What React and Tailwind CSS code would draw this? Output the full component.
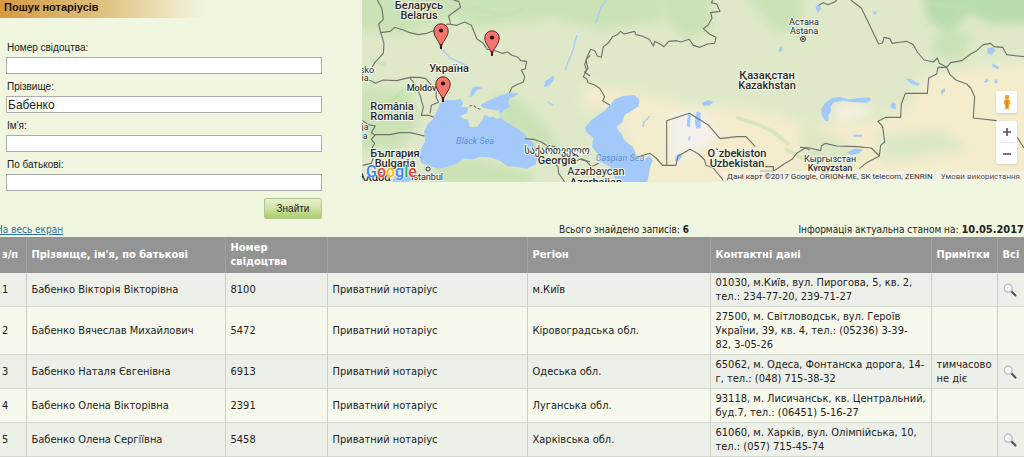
const fields = [
  { id: "certificate", label: "Номер свідоцтва:", value: "" },
  { id: "surname", label: "Прізвище:", value: "Бабенко" },
  { id: "name", label: "Ім'я:", value: "" },
  { id: "patronymic", label: "По батькові:", value: "" },
];

const rows = [
  { id: 1, name: "Бабенко Вікторія Вікторівна", number: "8100", region: "м.Київ", contact: "01030, м.Київ, вул. Пирогова, 5, кв. 2, тел.: 234-77-20, 239-71-27", note: "", details: true },
  { id: 2, name: "Бабенко Вячеслав Михайлович", number: "5472", region: "Кіровоградська обл.", contact: "27500, м. Світловодськ, вул. Героїв України, 39, кв. 4, тел.: (05236) 3-39-\n82, 3-05-26", note: "", details: false },
  { id: 3, name: "Бабенко Наталя Євгенівна", number: "6913", region: "Одеська обл.", contact: "65062, м. Одеса, Фонтанска дорога, 14-г, тел.: (048) 715-38-32", note: "тимчасово не діє", details: true },
  { id: 4, name: "Бабенко Олена Вікторівна", number: "2391", region: "Луганська обл.", contact: "93118, м. Лисичанськ, кв. Центральний, буд.7, тел.: (06451) 5-16-27", note: "", details: false },
  { id: 5, name: "Бабенко Олена Сергіївна", number: "5458", region: "Харківська обл.", contact: "61060, м. Харків, вул. Олімпійська, 10, тел.: (057) 715-45-74", note: "", details: true },
];

function SearchForm() {
  return (
    <section className="w-[362px] shrink-0 font-['Liberation_Sans',sans-serif]">
      <h1 className="h-[18px] w-[205px] bg-linear-to-r from-[#d39a3f] via-[#e0c17f] to-[#f1f6e0] pl-1 text-[11px] leading-[15px] font-bold text-[#1d0f00]">
        Пошук нотаріусів
      </h1>
      <form className="w-[322px] pt-[17px] pl-[6px]" onSubmit={(e) => e.preventDefault()}>
        {fields.map((field) => (
          <div key={field.id}>
            <label htmlFor={field.id} className="block pt-1 pl-px text-[10px] leading-[18px] text-[#222]">
              {field.label}
            </label>
            <input
              id={field.id}
              type="text"
              defaultValue={field.value}
              className="block h-[17px] w-full border border-[#abada8] bg-white px-px text-[12px] text-[#222] outline-none"
            />
          </div>
        ))}
        <div className="flex justify-end pt-[7px]">
          <button
            type="submit"
            className="h-[21px] w-[58px] rounded-xs border border-[#b5c592] bg-linear-to-b from-[#e9f1d2] via-[#cfe2a4] to-[#a9cd66] text-[10px] text-[#222]"
          >
            Знайти
          </button>
        </div>
      </form>
    </section>
  );
}

function Pin({ x, y }) {
  return (
    <g transform={`translate(${x} ${y})`}>
      <path
        d="M0 0C-.6-8-7.2-11-7.2-18A7.2 7.2 0 0 1 7.2-18C7.2-11 .6-8 0 0Z"
        fill="#f5756c"
        stroke="#5d2320"
        strokeWidth="1"
      />
      <path d="M0 0V-5" stroke="#2b1110" strokeWidth="1.4" />
      <circle cy="-18.500" r="2.1" fill="#2b0808" />
    </g>
  );
}

function MapDrawing() {
  return (
    <svg viewBox="0 0 662 182" preserveAspectRatio="xMidYMid slice" className="block h-full w-full font-['Roboto',sans-serif]">
      <defs>
        <filter id="soft" x="-20%" y="-20%" width="140%" height="140%">
          <feGaussianBlur stdDeviation="5" />
        </filter>
      </defs>
      <rect width="662" height="182" fill="#dfe9ca" />

      {/* vegetation and desert */}
      <g filter="url(#soft)">
        <g fill="#cbe2b6">
          <path d="M-10-10H300V22L240 30 190 18 120 28 90 16 40 36-10 28Z" />
          <path d="M300-10H350V32L322 38 304 20Z" />
          <path d="M0 85 50 92 56 126 35 150-10 150Z" />
          <path d="M130 92 160 100 185 128 200 152 170 146 142 128Z" />
          <path d="M70 160 110 158 170 172 168 190H70Z" />
          <path d="M380-10H440V35L410 30Z" />
          <path d="M560-10H670V24L630 24 606 14 590 32 566 22Z" fill="#b9dcae" />
          <path d="M575 30 610 34 600 60 568 56Z" />
        </g>
        <g fill="#f3eccd">
          <path d="M232 92 280 92 330 106 400 110 450 126 520 120 548 104 560 76 600 70 670 60V190H520L440 170 360 190H270L262 130Z" />
          <path d="M222 84 262 90 256 106 220 108Z" />
        </g>
        <path d="M306 116 330 110 352 124 354 140 334 152 308 160Z" fill="#f3f1ea" />
        <path d="M440 120 500 148 482 176 440 160Z" fill="#dfe8c6" />
        <path d="M515 134 580 130 606 150 520 162Z" fill="#dce8c8" />
        <path d="M476 104 510 106 505 116 472 122Z" fill="#f7f1e0" />
      </g>
      <g fill="none" stroke="#c2dfb0" strokeWidth="4" strokeLinecap="round" opacity=".5">
        <path d="M376 118 395 124 412 132 426 144" />
        <path d="M20 108 42 90 58 88M10 60 22 64M112 8 140 16 160 10" />
        <path d="M570 4 596 8 612 2M594 20 576 26M425 150 440 158 455 152" />
      </g>

      {/* water */}
      <g fill="#a3c9fb">
        <path
          transform="translate(-2 0) scale(.33333)"
          d="M240 310 258 300 282 301 300 297 310 308 304 322 325 322 322 338 300 349 312 357 324 359 330 382 352 380 366 362 374 344 388 352 402 350 412 358 426 352 422 340 414 330 388 328 366 322 362 314 382 304 402 294 424 284 448 280 476 279 468 288 450 294 444 306 450 320 432 330 420 346 434 364 448 371 470 384 494 402 500 414 520 428 530 444 533 470 528 492 500 506 468 500 442 498 420 482 390 472 360 470 340 478 312 476 288 492 262 500 238 506 210 498 184 490 178 468 184 444 196 424 192 396 202 374 222 354 232 330Z"
        />
        <path
          transform="translate(-2 0) scale(.33333)"
          d="M110 506 140 504 166 512 164 536 140 548H96L104 528ZM328 292 336 264 348 258 368 264 350 270 340 286ZM552 262 556 244 582 226 580 244 564 258Z"
        />
        <path
          transform="translate(218 0) scale(.33333)"
          d="M88 318 104 298 130 287 164 285 178 298 176 318 156 332 134 344 128 366 110 380 116 394 126 402 130 418 146 432 158 440 168 462 166 478 190 482 208 466 218 480 210 504 202 546H108L92 500 62 486 54 462 36 440 40 414 18 396 15 382 34 360 50 348 72 334ZM366 308 384 300 400 306 390 316 370 318ZM324 342 332 346 330 382 320 378ZM350 334 362 338 362 384 350 386 344 368ZM286 470 298 460 308 468 294 484 286 484ZM326 410 332 410 330 422 324 420ZM598 142 606 138 608 154 596 156Z"
        />
        <path
          transform="translate(438 0) scale(.33333)"
          d="M64 326 76 308 96 294 118 290 144 298 176 294 206 292 214 300 200 308 158 306 126 302 100 308 92 318 94 332 86 344 84 364 76 362 66 348ZM270 318 278 306 286 310 288 328 278 326ZM318 236 330 236 360 252 354 258 332 250ZM140 456 164 446 188 448 178 460 154 466ZM562 144 580 142 586 154 574 164 562 160ZM576 190 598 202 596 208 578 200ZM160 404 186 404 186 410 160 410ZM422 272 434 264 436 272 426 284ZM218 36 228 32 230 42 220 44ZM46 18 56 14 64 24 54 40ZM584 240 592 238 592 250 584 250ZM552 244 560 236 566 242 556 250Z"
        />
      </g>
      <g fill="none" stroke="#a7cbf4" strokeWidth="1.4">
        <path d="M215 35 211 50 203 70M245 0 239 7 234 23M288 116 282 122 281 127M77 46 88 58 106 66M186 102 191 105" />
      </g>

      {/* borders */}
      <g fill="none" stroke="#6f7369" strokeWidth="3.4" strokeLinejoin="round">
        <g transform="translate(-2 0) scale(.33333)">
          <path d="M52 0 66 26 70 58 56 72 62 98 90 94 104 82 130 90 150 98 174 104 200 100 220 92 238 100 262 72 290 76 314 66 334 76 344 100 350 116 370 130 382 148 400 150 426 160 442 156 456 166 474 172 482 182 500 184 496 206 484 210 494 230 490 246 470 254 456 262 448 280" />
          <path d="M62 98 72 130 70 160 44 188 34 206 8 212M8 234 36 244 46 250 70 240 110 242 150 232 178 232 198 236 212 254 230 264 228 292 236 306M150 234 172 262 182 292 190 322 184 346 206 346 222 352M210 340 214 316 236 306" />
          <path d="M272 74 266 48 282 36 302 22 296 4 280 0M8 362 24 374 46 378 34 398 44 404 90 404 120 398 150 398 194 408M46 404 34 418 44 430 32 452 42 466 34 490 8 496M142 468 184 472M496 416 520 418 544 426 560 436 584 440 602 462 622 470 640 486 664 476 690 486M578 486 594 500 596 520 614 546M690 166 678 180 684 206 674 216 690 228" />
          <path d="M328 318 340 316 350 324 362 328" strokeDasharray="9 5" />
        </g>
        <g transform="translate(218 0) scale(.33333)">
          <path d="M90 316 68 302 74 290 60 266 46 256 24 248 20 236 10 230 20 210 14 194 22 170 32 148 44 152 52 168 64 172 70 140 84 130 98 110 112 104 122 94 132 102 164 94 168 104 186 108 208 118 220 138 224 124 240 132 252 140 266 124 290 122 302 126 328 118 340 136 360 142 382 132 404 130 408 112 388 102 370 86 384 76 396 54 392 38 420 34 410 12 394 8 398 0" />
          <path d="M260 496V362L328 340 386 376 420 416 470 410 498 410 526 440M170 472 210 460 228 474 248 496H288L294 468 316 456 330 448 356 462 374 480 378 496 400 504 434 546M526 500H580V514H540M580 514 612 492 636 478 650 460 676 444 690 450M0 478 20 484 34 500 56 490" />
        </g>
        <g transform="translate(438 0) scale(.33333)">
          <path d="M152 0 184 24 206 70 236 132 248 128 252 112 270 116 276 130 304 126 320 124 340 134 352 156 372 180 400 186 412 174 418 190 440 202 452 188 486 182 512 162 530 152 550 134 572 130 582 140 608 142 620 164 672 170M56 16 70 8 84 14 104 6 110 0" />
          <path d="M440 202H414L410 222 386 234 382 280 316 280 304 312 302 352 258 352 234 364 248 380 254 426 242 436 238 468 214 444 170 440 110 438 76 430 64 438 62 452 30 444 0 442M440 202 450 224 468 240 500 252 512 264 524 290 520 354 590 362M652 412 672 444M238 468 200 488 178 506" />
        </g>
      </g>

      {/* place names */}
      <g textAnchor="middle" fill="#2b2b2b" stroke="#f3f6ea" strokeWidth="2" paintOrder="stroke" fontSize="10">
        <g fontWeight="500" fontSize="11">
          <text x="57" y="9">Беларусь</text>
          <text x="57" y="19">Belarus</text>
          <text x="87" y="72">Україна</text>
          <text x="30" y="110">România</text>
          <text x="30" y="120">Romania</text>
          <text x="33" y="157">България</text>
          <text x="33" y="167">Bulgaria</text>
          <text x="405" y="79">Қазақстан</text>
          <text x="405" y="89">Kazakhstan</text>
          <text x="375" y="157">O`zbekiston</text>
          <text x="375" y="167">Uzbekistan</text>
          <text x="195" y="164">Georgia</text>
          <text x="62" y="91" fontSize="9">Moldova</text>
          <text x="468" y="171" fontSize="9">Kyrgyzstan</text>
          <text x="10" y="181">Ελλάδα</text>
        </g>
        <text x="468" y="162" fontSize="9">Кыргызстан</text>
        <text x="195" y="154" fontFamily="'DejaVu Sans', sans-serif">საქართველო</text>
        <text x="234" y="175" fontSize="11">Azərbaycan</text>
        <text x="234" y="186" fontSize="11" fontWeight="500">Azerbaijan</text>
        <text x="442" y="25" fontSize="9">Астана</text>
        <text x="442" y="34" fontSize="9">Astana</text>
        <text x="65" y="180" fontSize="9">İstanbul</text>
        <text x="5" y="73" fontSize="9">sko</text>
        <text x="3" y="81" fontSize="9">ia</text>
        <text x="2" y="130" fontSize="9">ija</text>
        <text x="2" y="139" fontSize="9">ia</text>
      </g>
      <g textAnchor="middle" fill="#6090cf" fontSize="9" fontStyle="italic">
        <text x="113" y="144">Black Sea</text>
        <text x="258" y="161">Caspian Sea</text>
      </g>
      <g fill="none" stroke="#333">
        <circle cx="441" cy="39" r="2.5" fill="#fff" />
        <circle cx="441" cy="39" r=".8" fill="#333" />
        <circle cx="66" cy="169" r="2" fill="#fff" />
      </g>

      <Pin x={79} y={49} />
      <Pin x={130} y={56} />
      <Pin x={81} y={102} />
    </svg>
  );
}

function NotaryMap() {
  return (
    <section className="relative h-[182px] min-w-0 flex-1 overflow-hidden font-['Roboto',sans-serif]">
      <MapDrawing />
      <a
        href="#google"
        className="absolute bottom-0 left-1 text-[16px] leading-5 font-medium [text-shadow:0_0_2px_#fff,0_0_2px_#fff]"
      >
        <span className="text-[#4285f4]">G</span>
        <span className="text-[#ea4335]">o</span>
        <span className="text-[#fbbc05]">o</span>
        <span className="text-[#4285f4]">g</span>
        <span className="text-[#34a853]">l</span>
        <span className="text-[#ea4335]">e</span>
      </a>
      <button type="button" aria-label="Street View" className="absolute top-[91px] right-[7px] flex h-[22px] w-[21px] items-center justify-center rounded-xs bg-white shadow-sm">
        <svg viewBox="0 0 12 18" className="h-4 w-3">
          <ellipse cx="6" cy="16.5" rx="4" ry="1" fill="#d8d8d8" />
          <path d="M3 6.5Q6 4.500 9 6.500L10 11 8.500 12 8 16.500H4L3.500 12 2 11Z" fill="#f4ae35" />
          <path d="M4.500 7V11.500L5 16H7L7.500 11.500V7Z" fill="#dd8a1e" />
          <circle cx="6" cy="3.500" r="2.600" fill="#f0a22d" />
        </svg>
      </button>
      <div className="absolute top-[121px] right-[7px] flex w-[21px] flex-col items-center rounded-xs bg-white shadow-sm">
        <button type="button" aria-label="Збільшити" className="flex h-[21px] w-full items-center justify-center">
          <svg viewBox="0 0 8 8" className="size-2"><path d="M4 0V8M0 4H8" stroke="#555" strokeWidth="1.600" /></svg>
        </button>
        <div className="h-px w-4 bg-[#e6e6e6]" />
        <button type="button" aria-label="Зменшити" className="flex h-[21px] w-full items-center justify-center">
          <svg viewBox="0 0 8 8" className="size-2"><path d="M0 4H8" stroke="#555" strokeWidth="1.600" /></svg>
        </button>
      </div>
      <div className="absolute right-0 bottom-0 flex gap-2 bg-[#f5f5f0]/70 px-1 text-[8px] leading-[11px] text-[#333]">
        <span>Дані карт ©2017 Google, ORION-ME, SK telecom, ZENRIN</span>
        <a href="#terms" className="text-[#555]">Умови використання</a>
      </div>
    </section>
  );
}

function Magnifier() {
  return (
    <svg viewBox="0 0 14 14" className="size-[14px]">
      <path d="M8.300 8.300 12.500 12.500" stroke="#555" strokeWidth="2.200" strokeLinecap="round" />
      <circle cx="5.200" cy="5.200" r="4" fill="#f5f7fa" stroke="#b9bdc0" strokeWidth="1.200" />
      <path d="M3 4.800Q3.500 3 5.300 2.900" fill="none" stroke="#fff" />
    </svg>
  );
}

function ResultsTable() {
  return (
    <table className="w-full table-fixed border-collapse text-left text-[11px] leading-[14px] text-[#222]">
      <colgroup>
        <col className="w-[26px]" />
        <col className="w-[199px]" />
        <col className="w-[102px]" />
        <col className="w-[200px]" />
        <col className="w-[183px]" />
        <col className="w-[221px]" />
        <col className="w-[66px]" />
        <col className="w-[27px]" />
      </colgroup>
      <thead>
        <tr className="h-9 bg-[#949494] text-white [&>th]:border-l [&>th]:border-[#a2a2a2] [&>th]:pr-0 [&>th]:pl-[5px] [&>th:first-child]:border-l-0 [&>th:first-child]:pl-0.5">
          <th>з/п</th>
          <th>Прізвище, ім'я, по батькові</th>
          <th><span className="block w-[70px]">Номер свідоцтва</span></th>
          <th></th>
          <th>Регіон</th>
          <th>Контактні дані</th>
          <th>Примітки</th>
          <th>Всі</th>
        </tr>
      </thead>
      <tbody>
        {rows.map((row) => (
          <tr
            key={row.id}
            className="border-b border-[#d5d8cf] odd:bg-[#edf0e8] even:bg-[#f7f9ec] [&>td]:border-l [&>td]:border-[#cdd0c8] [&>td]:pt-[3px] [&>td]:pr-0.5 [&>td]:pb-[2px] [&>td]:pl-[5px] [&>td:first-child]:border-l-0 [&>td:first-child]:pl-0.5"
          >
            <td>{row.id}</td>
            <td>{row.name}</td>
            <td>{row.number}</td>
            <td>Приватний нотаріус</td>
            <td>{row.region}</td>
            <td className="whitespace-pre-line">{row.contact}</td>
            <td>{row.note}</td>
            <td>
              {row.details && (
                <button type="button" aria-label="Детальніше" className="flex items-center">
                  <Magnifier />
                </button>
              )}
            </td>
          </tr>
        ))}
      </tbody>
    </table>
  );
}

export default function App() {
  return (
    <div className="min-h-screen overflow-hidden bg-[#f0f6df] font-['DejaVu_Sans_Condensed','DejaVu_Sans',sans-serif]">
      <div className="flex">
        <SearchForm />
        <NotaryMap />
      </div>
      <div className="flex items-end pt-1 text-[10px] leading-[14px] text-[#222]">
        <div className="w-[559px]">
          <a href="#fullscreen" className="-ml-1 text-[#2f6da3] underline">На весь екран</a>
        </div>
        <p>Всього знайдено записів: <b>6</b></p>
        <p className="ml-auto">Інформація актуальна станом на: <b className="text-[11px]">10.05.2017</b></p>
      </div>
      <ResultsTable />
    </div>
  );
}
